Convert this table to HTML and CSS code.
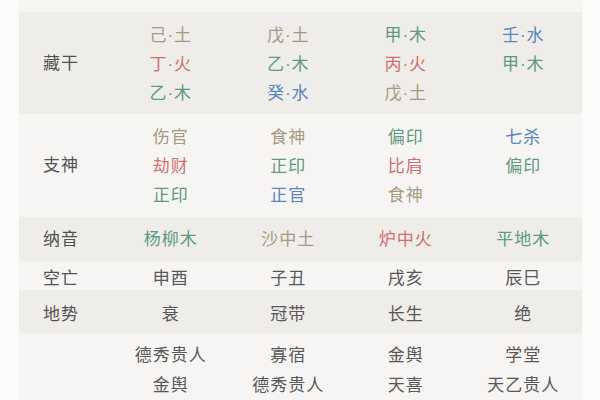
FILE: index.html
```html
<!DOCTYPE html>
<html lang="zh">
<head>
<meta charset="utf-8">
<title>八字排盘</title>
<link rel="stylesheet" href="styles.css">
</head>
<body>
<div class="panel">
  <div class="row light top"></div>

  <div class="row dark tall r-canggan">
    <div class="label">藏干</div>
    <div class="cell"><span class="tu">己·土</span><span class="huo">丁·火</span><span class="mu">乙·木</span></div>
    <div class="cell"><span class="tu">戊·土</span><span class="mu">乙·木</span><span class="shui">癸·水</span></div>
    <div class="cell"><span class="mu">甲·木</span><span class="huo">丙·火</span><span class="tu">戊·土</span></div>
    <div class="cell"><span class="shui">壬·水</span><span class="mu">甲·木</span></div>
  </div>

  <div class="row light tall r-zhishen">
    <div class="label">支神</div>
    <div class="cell"><span class="tu">伤官</span><span class="huo">劫财</span><span class="mu">正印</span></div>
    <div class="cell"><span class="tu">食神</span><span class="mu">正印</span><span class="shui">正官</span></div>
    <div class="cell"><span class="mu">偏印</span><span class="huo">比肩</span><span class="tu">食神</span></div>
    <div class="cell"><span class="shui">七杀</span><span class="mu">偏印</span></div>
  </div>

  <div class="row dark r-nayin">
    <div class="label">纳音</div>
    <div class="cell"><span class="mu">杨柳木</span></div>
    <div class="cell"><span class="tu">沙中土</span></div>
    <div class="cell"><span class="huo">炉中火</span></div>
    <div class="cell"><span class="mu">平地木</span></div>
  </div>

  <div class="row light r-kongwang">
    <div class="label">空亡</div>
    <div class="cell"><span>申酉</span></div>
    <div class="cell"><span>子丑</span></div>
    <div class="cell"><span>戌亥</span></div>
    <div class="cell"><span>辰巳</span></div>
  </div>

  <div class="row dark r-dishi">
    <div class="label">地势</div>
    <div class="cell"><span>衰</span></div>
    <div class="cell"><span>冠带</span></div>
    <div class="cell"><span>长生</span></div>
    <div class="cell"><span>绝</span></div>
  </div>

  <div class="row light r-shensha">
    <div class="label"></div>
    <div class="cell"><span>德秀贵人</span><span>金舆</span></div>
    <div class="cell"><span>寡宿</span><span>德秀贵人</span></div>
    <div class="cell"><span>金舆</span><span>天喜</span></div>
    <div class="cell"><span>学堂</span><span>天乙贵人</span></div>
  </div>
</div>
</body>
</html>
```

FILE: styles.css
```css
html, body {
  margin: 0;
  padding: 0;
  background: #fbfbfa;
  height: 400px;
  overflow: hidden;
}

body {
  font-family: "Liberation Sans", "Noto Sans CJK SC", sans-serif;
  font-size: 17px;
  color: #585858;
}

.panel {
  margin-left: 19px;
  width: 563px;
}

.row {
  display: grid;
  grid-template-columns: 93px repeat(4, 1fr);
  align-items: center;
  box-sizing: border-box;
  line-height: 29px;
}

.light { background: #f6f5f3; }
.dark { background: #efedea; }

.top { height: 12px; }
.r-canggan { height: 102px; }
.r-zhishen { height: 103px; }
.r-nayin { height: 44px; }
.r-kongwang { height: 29px; padding-top: 3px; }
.r-dishi { height: 43px; padding-top: 6px; }

.tall .cell {
  align-self: start;
  padding-top: 9px;
}

.r-shensha {
  height: 67px;
  align-items: start;
  padding-top: 8px;
}

.label {
  padding-left: 24px;
  color: #525252;
  letter-spacing: 1px;
}

.cell {
  display: flex;
  flex-direction: column;
  align-items: center;
  letter-spacing: 1px;
}

.r-shensha .cell { line-height: 30px; }

.tu { color: #a69a80; }
.huo { color: #cf706c; }
.mu { color: #5e9a7e; }
.shui { color: #5a86c0; }
```
